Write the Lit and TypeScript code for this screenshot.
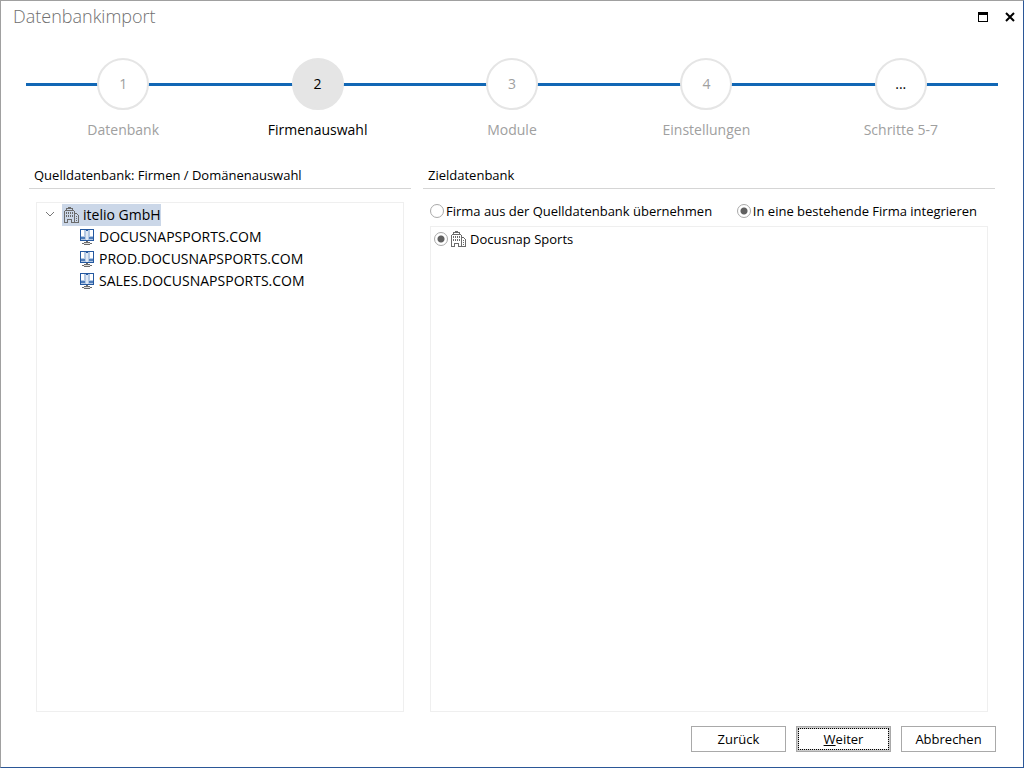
import { LitElement, html, css } from "lit";
import { customElement, state } from "lit/decorators.js";
import { classMap } from "lit/directives/class-map.js";

const companyIcon = html`<svg class="icon" viewBox="0 0 16 16" shape-rendering="crispEdges" aria-hidden="true">
  <path fill="#6b6b6b" d="M4 0h3v1h-3zM2 1h7v1h-7zM2 2h1v1h-1zM8 2h1v1h-1zM1 3h9v1h-9zM0 4h1v12h-1zM10 4h1v12h-1zM1 15h3v1h-3zM7 15h8v1h-8zM11 6h2v1h-2zM13 7h1v1h-1zM14 8h1v8h-1zM4 12h3v1h-3zM3 12h1v4h-1zM7 12h1v4h-1z"/>
  <path fill="#6b6b6b" d="M2 5h1v2h-1zM4 5h1v2h-1zM6 5h1v2h-1zM8 5h1v2h-1zM2 8h1v2h-1zM4 8h1v2h-1zM6 8h1v2h-1zM8 8h1v2h-1zM12 9h1v1h-1zM12 11h1v1h-1zM12 13h1v1h-1z"/>
</svg>`;

const domainIcon = html`<svg class="icon" viewBox="0 0 16 16" shape-rendering="crispEdges" aria-hidden="true">
  <path fill="#2559a0" d="M0 0h14v12h-14z"/>
  <path fill="#b3c8e3" d="M1 1h5v10h-5zM8 1h5v10h-5z"/>
  <path fill="#dfe9f5" d="M6 2h2v9h-2z"/>
  <path fill="#fff" d="M1 1h3v6h-3zM10 1h3v6h-3z"/>
  <path fill="#4f7dba" d="M1 8h4v2h-4zM9 8h4v2h-4z"/>
  <path fill="#6b6b6b" d="M6 12h2v1h-2zM4 13h6v1h-6zM2 14h10v1h-10zM4 15h6v1h-6z"/>
  <path fill="#dcdcdc" d="M4 14h6v1h-6z"/>
</svg>`;

@customElement("app-root")
export class AppRoot extends LitElement {
  @state() private mode = "integrate";
  @state() private expanded = true;

  private steps = [
    { mark: "1", label: "Datenbank" },
    { mark: "2", label: "Firmenauswahl", current: true },
    { mark: "3", label: "Module" },
    { mark: "4", label: "Einstellungen" },
    { mark: "...", label: "Schritte 5-7", more: true },
  ];
  private domains = ["DOCUSNAPSPORTS.COM", "PROD.DOCUSNAPSPORTS.COM", "SALES.DOCUSNAPSPORTS.COM"];

  static styles = css`
    :host {
      display: flex;
      flex-direction: column;
      box-sizing: border-box;
      min-height: 100vh;
      background: #fff;
      color: #000;
      border: 1px solid #a0a0a0;
      border-right-color: #2b5797;
      border-bottom-color: #2b5797;
      font: 13px/22px "Open Sans", "Noto Sans", sans-serif;
    }
    * { box-sizing: border-box; }
    .titlebar { display: flex; justify-content: space-between; align-items: center; height: 32px; padding: 0 7px 0 12px; }
    h1 { margin: 0; font-size: 18px; line-height: 30px; padding-bottom: 2px; font-weight: 300; color: #707070; }
    .window-buttons { display: flex; gap: 14px; }
    .window-buttons button { display: flex; width: 12px; height: 12px; padding: 0; border: 0; background: none; }
    .window-buttons svg { width: 12px; height: 12px; }
    .steps {
      display: grid; grid-template-columns: repeat(5, 1fr); margin: 25px 25px 0; padding: 0; list-style: none;
      font-size: 14px;
      background: linear-gradient(#1167b5, #1167b5) 0 25px / 100% 3px no-repeat;
    }
    .step { display: flex; flex-direction: column; align-items: center; gap: 9px; color: #a0a0a0; }
    .mark { width: 52px; height: 52px; border: 2px solid #e5e5e5; border-radius: 50%; background: #fff; text-align: center; line-height: 48px; }
    .current { color: #000; }
    .current .mark { background: #e5e5e5; }
    .more .mark { color: #000; }
    .panels { flex: 1; display: grid; grid-template-columns: 382fr 572fr; gap: 12px; margin: 23px 28px 0; }
    .panel { display: flex; flex-direction: column; min-width: 0; }
    h2 { margin: 0; padding: 0 5px 2px; border-bottom: 1px solid #d5d5d5; font-size: 13px; line-height: 22px; font-weight: 400; }
    .box { flex: 1; margin: 0 7px; border: 1px solid #efefef; }
    .tree { margin-top: 13px; padding: 1px 0 0 7px; font-size: 14px; }
    .tree ul { margin: 0; padding: 0; list-style: none; }
    .tree .children { padding-left: 34px; }
    .row { display: flex; align-items: center; }
    .node { display: flex; align-items: center; gap: 3px; height: 22px; padding: 0 0 0 2px; }
    .selected { background: #cbd7e8; }
    .toggle { display: flex; width: 12px; height: 22px; align-items: center; margin-right: 6px; padding: 0; border: 0; background: none; }
    .toggle svg { width: 12px; height: 12px; }
    .icon { width: 16px; height: 16px; flex: none; }
    .options { display: flex; justify-content: space-between; height: 37px; padding: 11px 18px 4px 7px; white-space: nowrap; }
    label { display: flex; align-items: center; gap: 2px; }
    input { appearance: none; width: 14px; height: 14px; margin: 0; border: 1px solid #a9a9a9; border-radius: 50%; background: #fff; flex: none; }
    input:checked { background: radial-gradient(circle, #606060 0 3px, #fff 4px); }
    .targets { padding: 1px 3px; }
    .targets label { gap: 3px; }
    .footer { display: flex; justify-content: flex-end; gap: 10px; padding: 14px 27px 15px; }
    .footer button { width: 95px; height: 26px; padding: 0; border: 1px solid #a9a9a9; background: #fff; color: #000; font: inherit; }
    .footer .default { box-shadow: inset 0 0 0 2px #ccc; outline: 1px dotted #000; outline-offset: -3px; }
  `;

  private choose(mode: string) {
    this.mode = mode;
  }

  render() {
    return html`
      <header class="titlebar">
        <h1>Datenbankimport</h1>
        <div class="window-buttons">
          <button aria-label="Maximieren"><svg viewBox="0 0 12 12" shape-rendering="crispEdges"><path d="M0 1h10v10h-10zM1 4v6h8v-6z" fill-rule="evenodd"/></svg></button>
          <button aria-label="Schließen"><svg viewBox="0 0 12 12"><path d="M2 2l8 8M10 2l-8 8" stroke="#000" stroke-width="2"/></svg></button>
        </div>
      </header>
      <ol class="steps">
        ${this.steps.map((s) => html`<li class=${classMap({ step: true, current: !!s.current, more: !!s.more })}>
          <span class="mark">${s.mark}</span><span>${s.label}</span>
        </li>`)}
      </ol>
      <main class="panels">
        <section class="panel">
          <h2>Quelldatenbank: Firmen / Domänenauswahl</h2>
          <div class="box tree">
            <div class="row">
              <button class="toggle" aria-label="Knoten umschalten" @click=${() => (this.expanded = !this.expanded)}>
                <svg viewBox="0 0 12 12"><path d="M2 3l4 4l4-4" fill="none" stroke="#777"/></svg>
              </button>
              <span class="node selected">${companyIcon}<span>itelio GmbH</span></span>
            </div>
            ${this.expanded ? html`<ul class="children">${this.domains.map((d) => html`<li class="node">${domainIcon}<span>${d}</span></li>`)}</ul>` : ""}
          </div>
        </section>
        <section class="panel">
          <h2>Zieldatenbank</h2>
          <div class="options">
            <label><input type="radio" name="mode" .checked=${this.mode === "copy"} @change=${() => this.choose("copy")}>Firma aus der Quelldatenbank übernehmen</label>
            <label><input type="radio" name="mode" .checked=${this.mode === "integrate"} @change=${() => this.choose("integrate")}>In eine bestehende Firma integrieren</label>
          </div>
          <div class="box targets">
            <label><input type="radio" name="target" checked>${companyIcon}<span>Docusnap Sports</span></label>
          </div>
        </section>
      </main>
      <footer class="footer">
        <button>Zurück</button>
        <button class="default"><u>W</u>eiter</button>
        <button>Abbrechen</button>
      </footer>
    `;
  }
}
